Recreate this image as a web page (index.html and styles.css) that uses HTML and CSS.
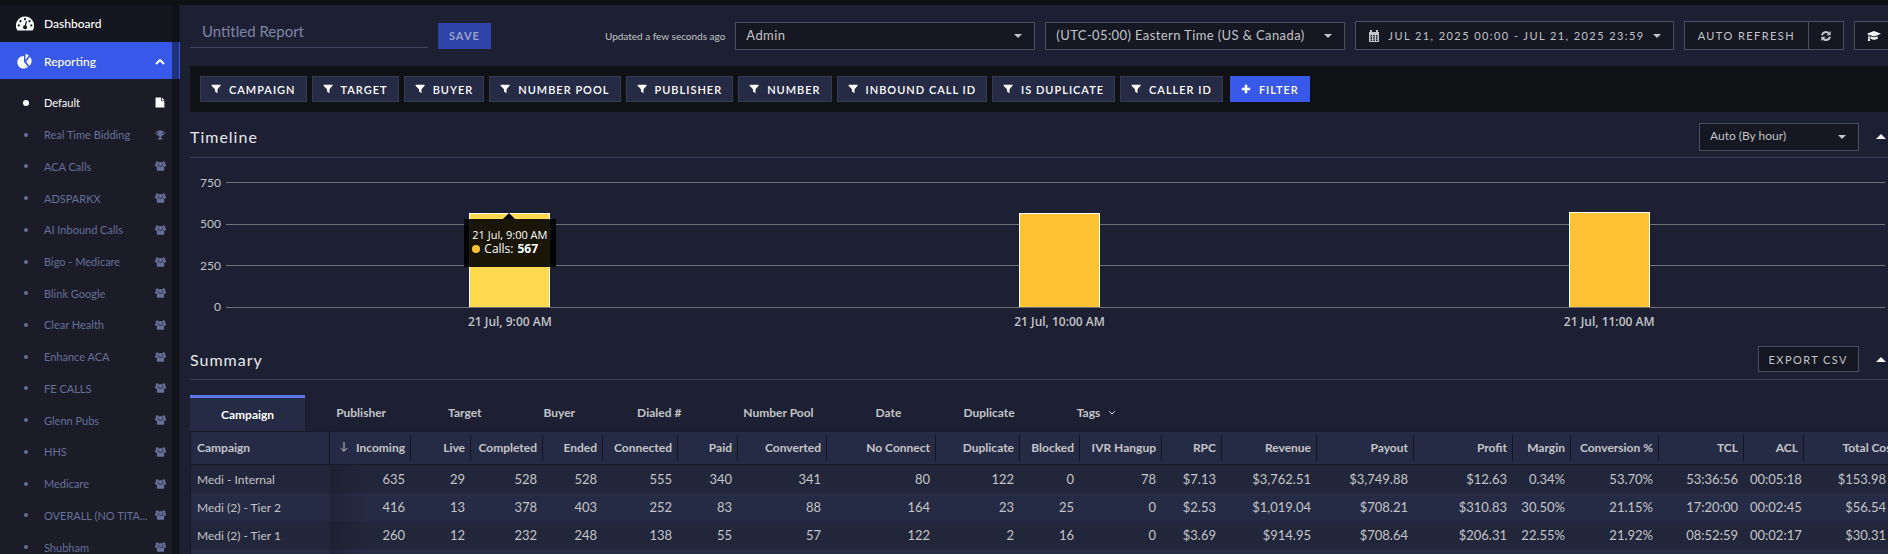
FILE: index.html
```html
<!DOCTYPE html>
<html lang="en">
<head>
<meta charset="utf-8">
<title>Reporting</title>
<link rel="stylesheet" href="styles.css">
</head>
<body>
<svg class="defs" aria-hidden="true">
  <symbol id="funnel" viewBox="0 0 12 12"><path d="M1 1h10.500v1L7.800 6.200V11L4.800 9V6.200L.6 2z"/></symbol>
  <symbol id="caret" viewBox="0 0 8 4"><path d="M0 0h8L4 4z"/></symbol>
  <symbol id="caret-up" viewBox="0 0 10 5"><path d="M0 5h10L5 0z"/></symbol>
  <symbol id="users" viewBox="0 0 20 18"><circle cx="4" cy="3" r="2.800"/><circle cx="16" cy="3" r="2.800"/><circle cx="10" cy="5.500" r="3.700"/><path d="M0 10V7.500Q0 5.500 1.500 5.500q2.500 1 4.300 0Q5.500 8 7 9.300H5Q3.800 9.500 3.200 10.200zM20 10V7.500Q20 5.500 18.500 5.500q-2.500 1-4.300 0Q14.500 8 13 9.300h2q1.200.2 1.800.9zM3.200 15.500q0-6 3.300-6.300 3.500 2.500 7 0 3.300.3 3.300 6.300 0 2.300-2 2.300H5.200q-2 0-2-2.300z"/></symbol>
</svg>
<div class="app">
  <nav class="sidebar">
    <a class="nav" href="#"><svg class="nav-icon" viewBox="0 0 18 15"><path fill-rule="evenodd" d="M9 .5a9 9 0 0 1 7.500 14H1.500A9 9 0 0 1 9 .5zM9 2a1.100 1.100 0 1 0 .01 0zM4.500 4a1.100 1.100 0 1 0 .01 0zM13.500 4a1.100 1.100 0 1 0 .01 0zM2.700 8.300a1.100 1.100 0 1 0 .01 0zM15.300 8.300a1.100 1.100 0 1 0 .01 0zM9.800 5l-1 4.300a2 2 0 1 0 1.200.2L11 5.400z"/></svg><span>Dashboard</span></a>
    <a class="nav nav-on" href="#"><svg class="nav-icon" viewBox="0 0 18 15"><path d="M8 2v6l4 4.800A6.300 6.300 0 1 1 8 2zM9.500 0a6 6 0 0 1 3.300 1.500L9.500 6zM14 2.800a6.300 6.300 0 0 1-.6 9L10 7.700z"/></svg><span>Reporting</span><svg class="chev" viewBox="0 0 10 6"><path d="M1 5l4-4 4 4"/></svg></a>
    <ul class="reports">
      <li class="on"><a href="#">Default</a><svg class="ri" viewBox="0 0 20 18"><path d="M1 0h10v6h6v12H1zM12.500 0L17 4.700h-4.500z"/></svg></li>
      <li><a href="#">Real Time Bidding</a><svg class="ri" viewBox="0 0 20 18"><path fill-rule="evenodd" d="M5 1h9v2h4q0 6-5 7l-2 2v2q3 0 3 3H5q0-3 3-3v-2l-2-2Q1 9 1 3h4zM5 4.500H2.500Q3 7 5.500 8zM14 4.500h2.500Q16 7 13.500 8z"/></svg></li>
      <li><a href="#">ACA Calls</a><svg class="ri"><use href="#users"/></svg></li>
      <li><a href="#">ADSPARKX</a><svg class="ri"><use href="#users"/></svg></li>
      <li><a href="#">AI Inbound Calls</a><svg class="ri"><use href="#users"/></svg></li>
      <li><a href="#">Bigo - Medicare</a><svg class="ri"><use href="#users"/></svg></li>
      <li><a href="#">Blink Google</a><svg class="ri"><use href="#users"/></svg></li>
      <li><a href="#">Clear Health</a><svg class="ri"><use href="#users"/></svg></li>
      <li><a href="#">Enhance ACA</a><svg class="ri"><use href="#users"/></svg></li>
      <li><a href="#">FE CALLS</a><svg class="ri"><use href="#users"/></svg></li>
      <li><a href="#">Glenn Pubs</a><svg class="ri"><use href="#users"/></svg></li>
      <li><a href="#">HHS</a><svg class="ri"><use href="#users"/></svg></li>
      <li><a href="#">Medicare</a><svg class="ri"><use href="#users"/></svg></li>
      <li><a href="#">OVERALL (NO TITA...</a><svg class="ri"><use href="#users"/></svg></li>
      <li><a href="#">Shubham</a><svg class="ri"><use href="#users"/></svg></li>
    </ul>
    <div class="track"></div>
  </nav>
  <main class="main">
    <header class="top">
      <input class="name" type="text" placeholder="Untitled Report" aria-label="Report name">
      <button class="btn save" type="button">SAVE</button>
      <span class="updated">Updated a few seconds ago</span>
      <div class="sel sel-top"><select aria-label="Role"><option>Admin</option></select><svg class="caret"><use href="#caret"/></svg></div>
      <div class="sel sel-top"><select aria-label="Time zone"><option>(UTC-05:00) Eastern Time (US &amp; Canada)</option></select><svg class="caret"><use href="#caret"/></svg></div>
      <button class="btn dark tall range" type="button"><svg class="cal" viewBox="0 0 12 12"><path fill-rule="evenodd" d="M1 2h1V0h2v2h4V0h2v2h1v10H1zM2.500 5v1.400H4V5zM5.200 5v1.400h1.600V5zM8 5v1.400h1.500V5zM2.500 7.300v1.400H4V7.300zM5.200 7.300v1.400h1.600V7.300zM8 7.300v1.400h1.500V7.300zM2.500 9.600V11H4V9.600zM5.200 9.600V11h1.600V9.600zM8 9.600V11h1.500V9.600z"/></svg>JUL 21, 2025 00:00 - JUL 21, 2025 23:59<svg class="caret"><use href="#caret"/></svg></button>
      <div class="pair"><button class="btn dark tall auto" type="button">AUTO REFRESH</button><button class="btn dark tall refresh" type="button" aria-label="Refresh"><svg class="ref" viewBox="0 0 10 10"><path d="M1 4.300A4 4 0 0 1 8 2.500M9 5.700A4 4 0 0 1 2 7.500"/><path class="fill" d="M9.700 0v4.300H5.500zM.3 10V5.700h4.200z"/></svg></button></div>
      <button class="btn dark tall learn" type="button" aria-label="Learn"><svg class="cap" viewBox="0 0 14 10"><path d="M7 0l7 2.800-7 2.700-4.600-1.700v2q.8.500.3 1.300L3 10H.8L1.300 7q-.5-.8.200-1.300V3.400L0 2.800zM3.500 5.300L7 6.600l3.700-1.400v2.500Q7 9.800 3.500 7.700z"/></svg></button>
    </header>
    <div class="filters">
      <button class="btn chip" type="button"><svg><use href="#funnel"/></svg>CAMPAIGN</button>
      <button class="btn chip" type="button"><svg><use href="#funnel"/></svg>TARGET</button>
      <button class="btn chip" type="button"><svg><use href="#funnel"/></svg>BUYER</button>
      <button class="btn chip" type="button"><svg><use href="#funnel"/></svg>NUMBER POOL</button>
      <button class="btn chip" type="button"><svg><use href="#funnel"/></svg>PUBLISHER</button>
      <button class="btn chip" type="button"><svg><use href="#funnel"/></svg>NUMBER</button>
      <button class="btn chip" type="button"><svg><use href="#funnel"/></svg>INBOUND CALL ID</button>
      <button class="btn chip" type="button"><svg><use href="#funnel"/></svg>IS DUPLICATE</button>
      <button class="btn chip" type="button"><svg><use href="#funnel"/></svg>CALLER ID</button>
      <button class="btn chip add" type="button"><svg viewBox="0 0 12 12"><path d="M4.500 1h3v3.500H11v3H7.500V11h-3V7.500H1v-3h3.500z"/></svg>FILTER</button>
    </div>
    <section>
      <div class="head head-time">
        <h2>Timeline</h2>
        <div class="sel sel-hour"><select aria-label="Interval"><option>Auto (By hour)</option></select><svg class="caret"><use href="#caret"/></svg></div>
        <button class="fold" type="button" aria-label="Collapse timeline"><svg><use href="#caret-up"/></svg></button>
      </div>
      <div class="chart">
        <div class="axis"><span>750</span><span>500</span><span>250</span><span>0</span></div>
        <div class="plot">
          <div class="line"></div><div class="line"></div><div class="line"></div><div class="line"></div>
          <div class="bars">
            <div class="slot"><div class="bar hot" style="height:94px"><div class="tip"><div>21 Jul, 9:00 AM</div><div class="tip-row"><i></i>Calls: <b>567</b></div></div></div></div>
            <div class="slot"><div class="bar" style="height:94px"></div></div>
            <div class="slot"><div class="bar" style="height:95px"></div></div>
          </div>
          <div class="xlabels"><span>21 Jul, 9:00 AM</span><span>21 Jul, 10:00 AM</span><span>21 Jul, 11:00 AM</span></div>
        </div>
      </div>
    </section>
    <section>
      <div class="head head-sum">
        <h2>Summary</h2>
        <button class="btn dark export" type="button">EXPORT CSV</button>
        <button class="fold" type="button" aria-label="Collapse summary"><svg><use href="#caret-up"/></svg></button>
      </div>
      <div class="tabs">
        <button class="tab tab-on" type="button">Campaign</button><button class="tab" type="button">Publisher</button><button class="tab" type="button">Target</button><button class="tab" type="button">Buyer</button><button class="tab" type="button">Dialed #</button><button class="tab" type="button">Number Pool</button><button class="tab" type="button">Date</button><button class="tab" type="button">Duplicate</button><button class="tab" type="button">Tags<svg class="down" viewBox="0 0 8 5"><path d="M1 1l3 3 3-3"/></svg></button>
      </div>
      <table>
        <colgroup><col style="width:139px"><col style="width:81px"><col style="width:60px"><col style="width:72px"><col style="width:60px"><col style="width:75px"><col style="width:60px"><col style="width:89px"><col style="width:109px"><col style="width:84px"><col style="width:60px"><col style="width:82px"><col style="width:60px"><col style="width:95px"><col style="width:97px"><col style="width:99px"><col style="width:58px"><col style="width:88px"><col style="width:85px"><col style="width:60px"><col style="width:98px"></colgroup>
        <thead><tr><th><span>Campaign</span></th><th><span><svg class="sort" viewBox="0 0 8 10"><path d="M4 0v9M.7 6L4 9.300 7.300 6"/></svg>Incoming</span></th><th><span>Live</span></th><th><span>Completed</span></th><th><span>Ended</span></th><th><span>Connected</span></th><th><span>Paid</span></th><th><span>Converted</span></th><th><span>No Connect</span></th><th><span>Duplicate</span></th><th><span>Blocked</span></th><th><span>IVR Hangup</span></th><th><span>RPC</span></th><th><span>Revenue</span></th><th><span>Payout</span></th><th><span>Profit</span></th><th><span>Margin</span></th><th><span>Conversion %</span></th><th><span>TCL</span></th><th><span>ACL</span></th><th><span>Total Cost</span></th></tr></thead>
        <tbody>
          <tr><td>Medi - Internal</td><td>635</td><td>29</td><td>528</td><td>528</td><td>555</td><td>340</td><td>341</td><td>80</td><td>122</td><td>0</td><td>78</td><td>$7.13</td><td>$3,762.51</td><td>$3,749.88</td><td>$12.63</td><td>0.34%</td><td>53.70%</td><td>53:36:56</td><td>00:05:18</td><td>$153.98</td></tr>
          <tr><td>Medi (2) - Tier 2</td><td>416</td><td>13</td><td>378</td><td>403</td><td>252</td><td>83</td><td>88</td><td>164</td><td>23</td><td>25</td><td>0</td><td>$2.53</td><td>$1,019.04</td><td>$708.21</td><td>$310.83</td><td>30.50%</td><td>21.15%</td><td>17:20:00</td><td>00:02:45</td><td>$56.54</td></tr>
          <tr><td>Medi (2) - Tier 1</td><td>260</td><td>12</td><td>232</td><td>248</td><td>138</td><td>55</td><td>57</td><td>122</td><td>2</td><td>16</td><td>0</td><td>$3.69</td><td>$914.95</td><td>$708.64</td><td>$206.31</td><td>22.55%</td><td>21.92%</td><td>08:52:59</td><td>00:02:17</td><td>$30.31</td></tr>
          <tr><td></td><td></td><td></td><td></td><td></td><td></td><td></td><td></td><td></td><td></td><td></td><td></td><td></td><td></td><td></td><td></td><td></td><td></td><td></td><td></td><td></td></tr>
        </tbody>
      </table>
    </section>
  </main>
</div>
</body>
</html>
```

FILE: styles.css
```css
* { box-sizing: border-box; }
html { background: #101114; }
body { margin: 0; height: 100vh; overflow: hidden; font-family: Lato, sans-serif; font-size: 12px; color: #c3c4c8; }
button, select, input { font-family: inherit; margin: 0; border-radius: 0; }
a { color: inherit; text-decoration: none; }
svg { fill: currentColor; flex: none; }
.defs { position: absolute; width: 0; height: 0; }
.app { display: flex; padding-top: 5px; height: 100vh; }

.sidebar { position: relative; flex: none; width: 180px; background: #1b1c28; }
.nav { display: flex; align-items: center; height: 37px; padding: 0 15px 0 16px; gap: 10px; color: #fff; background: #141620; font-weight: 500; font-size: 12px; }
.nav-on { background: #3858e9; padding-top: 2px; }
.nav-on span { flex: 1; }
.nav-icon { width: 18px; height: 15px; }
.chev { width: 10px; height: 6px; fill: none; stroke: #fff; stroke-width: 2; }
.reports { list-style: none; margin: 0; padding: 8px 14px 0 24px; min-height: 484px; display: grid; grid-auto-rows: 1fr; font-size: 11px; }
.reports li { display: flex; align-items: center; color: #66709a; }
.reports li::before { content: ""; width: 4px; height: 4px; margin-right: 16px; border-radius: 50%; background: currentColor; }
.reports li.on { color: #fff; }
.reports .on::before { width: 6px; height: 6px; margin: 0 15px 0 -1px; }
.reports a { flex: 1; white-space: nowrap; }
.ri { width: 11px; height: 10px; }
.on .ri { height: 11px; }
.track { position: absolute; top: 0; bottom: 0; right: 1px; width: 7px; background: rgba(10, 11, 16, .5); }

.main { flex: 1; min-width: 0; padding-left: 10px; background: #1c2032; overflow: hidden; }
.top { display: flex; align-items: center; height: 61px; gap: 10px; white-space: nowrap; }
.name { width: 238px; height: 32px; margin-bottom: 8px; padding: 0 12px; border: 0; border-bottom: 1px solid #41455e; background: none; color: #8088a8; font-size: 15px; }
.name::placeholder { color: #7f86a4; }
.btn { display: flex; align-items: center; height: 26px; padding: 0 10px; border: 1px solid #363b54; background: #262b45; color: #fff; font-size: 11px; font-weight: 600; letter-spacing: 1px; white-space: nowrap; }
.save { background: #2c43a8; border-color: #2c43a8; color: #9aa2c8; font-weight: 700; }
.updated { margin-left: auto; font-size: 10px; }
.sel { position: relative; flex: none; }
.sel select { appearance: none; width: 100%; height: 28px; padding: 0 10px 2px; border: 1px solid #4b4e60; background: #151722; color: #c3c4c8; font-size: 13px; }
.sel-top { width: 300px; }
.sel-top select { letter-spacing: .03em; }
.sel .caret { position: absolute; right: 13px; top: 12px; }
.caret { width: 8px; height: 4px; }
.btn.dark { background: #151722; border-color: #4b4e60; color: #c3c4c8; font-weight: 400; letter-spacing: .13em; }
.tall { height: 29px; }
.range { padding: 0 12px; gap: 8px; }
.cal { width: 12px; height: 12px; }
.pair { display: flex; }
.auto { padding: 0 13px; border-right: 0; }
.refresh { width: 36px; justify-content: center; }
.ref { width: 12px; height: 10px; fill: none; stroke: currentColor; stroke-width: 2; }
.ref .fill { fill: currentColor; stroke: none; }
.btn.learn { width: 42px; margin-right: -8px; padding: 0 12px; color: #fff; }
.cap { width: 14px; height: 10px; }

.filters { display: flex; gap: 5px; padding: 10px; background: #101114; }
.chip { gap: 8px; }
.chip svg { width: 10px; height: 10px; }
.add { background: #3858e9; border-color: #3858e9; margin-left: 2px; }

.head { display: flex; align-items: center; border-bottom: 1px solid #3a3f5c; }
.head-time { height: 46px; padding-top: 4px; }
.head-sum { height: 41px; }
h2 { margin: 0 auto 0 0; font-size: 16px; font-weight: 400; letter-spacing: 1px; color: #e8e8ec; }
.sel-hour { width: 160px; }
.sel-hour select { font-size: 12px; }
.fold { display: flex; margin: 0 2px 0 17px; padding: 0; border: 0; background: none; color: #f0f0f0; }
.fold svg { width: 10px; height: 5px; }

.chart { display: flex; padding: 24px 3px 0 0; height: 181px; }
.axis { width: 31px; height: 125px; display: flex; flex-direction: column; justify-content: space-between; line-height: 1px; text-align: right; }
.plot { position: relative; flex: 1; margin-left: 5px; height: 126px; display: flex; flex-direction: column; justify-content: space-between; }
.line { height: 1px; background: #6f7177; }
.bars { position: absolute; left: 9px; right: 1px; top: 0; bottom: 1px; display: flex; align-items: flex-end; }
.slot { flex: 1; display: flex; justify-content: center; }
.bar { position: relative; width: 81px; border: 1px solid #fff; border-bottom: 0; background: #ffc233; }
.hot { background: #ffda4f; }
.tip { position: absolute; z-index: 1; left: -6px; top: 5px; width: 92px; height: 48px; padding: 9px 0 0 8px; background: rgba(0, 0, 0, .9); color: #fff; font-family: "Open Sans", sans-serif; font-size: 11px; line-height: 14px; white-space: nowrap; }
.tip::before { content: ""; position: absolute; left: 39px; top: -6px; border: 6px solid transparent; border-top: 0; border-bottom-color: #0a0a08; }
.tip-row { display: flex; gap: 4px; align-items: center; font-size: 12px; }
.tip i { width: 8px; height: 8px; border-radius: 50%; background: #ffc233; }
.xlabels { position: absolute; left: 9px; right: 1px; top: 132px; display: flex; font-family: "Open Sans", sans-serif; font-size: 12px; font-weight: 600; line-height: 16px; }
.xlabels span { flex: 1; text-align: center; }

.tabs { display: flex; padding-top: 15px; height: 51px; }
.tab { display: flex; align-items: center; gap: 8px; padding: 0 31px 4px; border: 0; border-top: 3px solid transparent; background: none; color: #c3c4c8; font-size: 12px; font-weight: 700; white-space: nowrap; }
.tab-on { background: #262b45; border-color: #5b78ee; color: #fff; padding-bottom: 1px; }
.down { width: 8px; height: 5px; fill: none; stroke: currentColor; }
table { width: 100%; border-collapse: separate; border-spacing: 0; table-layout: fixed; border-left: 1px solid #161824; font-size: 13px; }
th { height: 34px; padding: 0; background: #262b45; border-top: 1px solid #171a28; border-bottom: 1px solid #171a28; font-size: 12px; font-weight: 700; text-align: right; white-space: nowrap; }
th span { display: block; line-height: 26px; padding: 0 5px; border-right: 1px solid #12141e; }
th:first-child { text-align: left; border-right: 1px solid #12141e; }
th:first-child span { border: 0; padding-left: 6px; }
.sort { width: 8px; height: 10px; margin-right: 8px; fill: none; stroke: currentColor; }
td { height: 28px; padding: 0 6px; text-align: right; background: #22263a; white-space: nowrap; }
td:first-child { text-align: left; font-size: 12px; }
td:last-child { padding-right: 16px; }
tr:nth-child(even) td { background: #262b45; }
tbody td:nth-child(2) { background-image: linear-gradient(90deg, rgba(20, 24, 36, .4), transparent 35px); }
```
